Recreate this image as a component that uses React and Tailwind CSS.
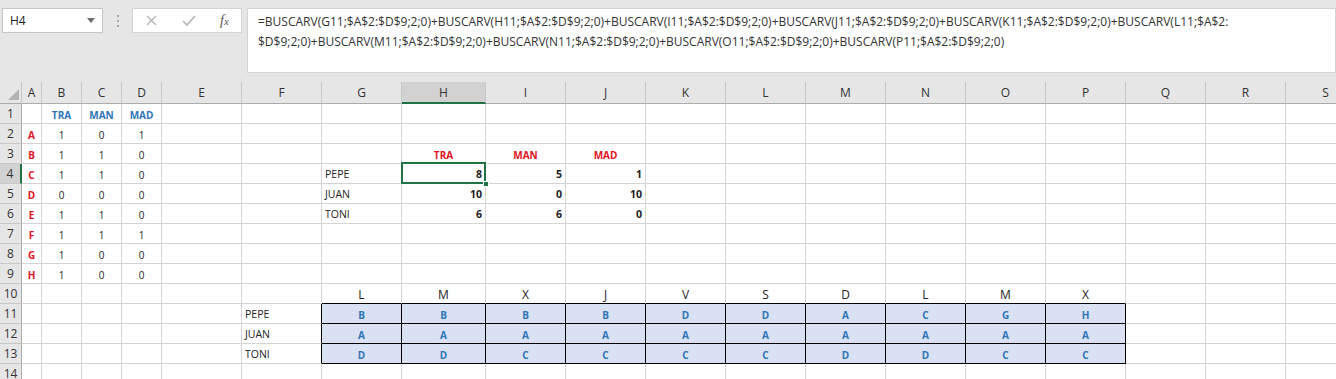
import React from 'react'

const COLS = ['A', 'B', 'C', 'D', 'E', 'F', 'G', 'H', 'I', 'J', 'K', 'L', 'M', 'N', 'O', 'P', 'Q', 'R', 'S']
const ROWS = [1, 2, 3, 4, 5, 6, 7, 8, 9, 10, 11, 12, 13, 14]

const GRID =
  'grid grid-cols-[22px_20px_40px_40px_40px_80px_80px_80px_84px_80px_80px_80px_80px_80px_80px_80px_80px_80px_80px_80px]'

// cell content: [text, kind]
const data = {
  B1: ['TRA', 'head'],
  C1: ['MAN', 'head'],
  D1: ['MAD', 'head'],
  H3: ['TRA', 'red'],
  I3: ['MAN', 'red'],
  J3: ['MAD', 'red'],
  G4: ['PEPE', 'name'],
  G5: ['JUAN', 'name'],
  G6: ['TONI', 'name'],
  H4: ['8', 'bold'],
  I4: ['5', 'bold'],
  J4: ['1', 'bold'],
  H5: ['10', 'bold'],
  I5: ['0', 'bold'],
  J5: ['10', 'bold'],
  H6: ['6', 'bold'],
  I6: ['6', 'bold'],
  J6: ['0', 'bold'],
  F11: ['PEPE', 'name'],
  F12: ['JUAN', 'name'],
  F13: ['TONI', 'name'],
}

const lookup = [
  ['A', 1, 0, 1],
  ['B', 1, 1, 0],
  ['C', 1, 1, 0],
  ['D', 0, 0, 0],
  ['E', 1, 1, 0],
  ['F', 1, 1, 1],
  ['G', 1, 0, 0],
  ['H', 1, 0, 0],
]
lookup.forEach((row, i) => {
  const r = i + 2
  data['A' + r] = [row[0], 'red']
  data['B' + r] = [String(row[1]), 'num']
  data['C' + r] = [String(row[2]), 'num']
  data['D' + r] = [String(row[3]), 'num']
})

const days = ['L', 'M', 'X', 'J', 'V', 'S', 'D', 'L', 'M', 'X']
const plan = [
  ['B', 'B', 'B', 'B', 'D', 'D', 'A', 'C', 'G', 'H'],
  ['A', 'A', 'A', 'A', 'A', 'A', 'A', 'A', 'A', 'A'],
  ['D', 'D', 'C', 'C', 'C', 'C', 'D', 'D', 'C', 'C'],
]
const tblCols = ['G', 'H', 'I', 'J', 'K', 'L', 'M', 'N', 'O', 'P']
tblCols.forEach((c, i) => {
  data[c + '10'] = [days[i], 'day']
  plan.forEach((row, j) => {
    data[c + (11 + j)] = [row[i], 'tbl']
  })
})

const kinds = {
  head: 'justify-center font-bold text-[#2e75b6] text-[10px]',
  red: 'justify-center font-bold text-[#e0141e] text-[10px]',
  num: 'justify-center text-[#222] text-[10px]',
  name: 'justify-start pl-[3px] text-[#222] text-[10.5px]',
  bold: 'justify-end pr-[3px] font-bold text-[#222] text-[10.5px]',
  day: 'justify-center text-[#222] text-[12px]',
  tbl: 'justify-center font-bold text-[#2e75b6] text-[10px] bg-[#d9e1f2]',
}

function Cell({ col, row }) {
  const key = col + row
  const entry = data[key]
  const inTable = tblCols.includes(col) && row >= 11 && row <= 13
  const aboveTable = tblCols.includes(col) && row === 10
  const leftOfTable = col === 'F' && row >= 11 && row <= 13

  let border = 'border-r border-b border-r-[#d4d4d4] border-b-[#d4d4d4]'
  if (inTable) border = 'border-r border-b border-r-black border-b-black'
  else if (aboveTable) border = 'border-r border-b border-r-[#d4d4d4] border-b-black'
  else if (leftOfTable) border = 'border-r border-b border-r-black border-b-[#d4d4d4]'

  const kind = entry ? kinds[entry[1]] : ''
  const active = key === 'H4'

  return (
    <div className={`relative flex h-[20px] items-center pt-[2px] leading-none ${active ? 'z-10' : ''} ${border} ${kind}`}>
      {entry ? entry[0] : null}
      {active && (
        <>
          <div className="pointer-events-none absolute -left-[1px] -top-[2px] -right-[1px] -bottom-[1px] border-2 border-[#217346]" />
          <div className="absolute -right-[4px] -bottom-[4px] h-[6px] w-[6px] border border-white bg-[#217346]" />
        </>
      )}
    </div>
  )
}

function FormulaBar() {
  return (
    <div className="flex h-[82px] items-start bg-[#e6e6e6] pt-[8px]">
      <div className="ml-[2px] flex h-[25px] w-[101px] items-center justify-between border border-[#c6c6c6] bg-white pl-[7px] pr-[7px] text-[12px] text-[#222]">
        <span>H4</span>
        <svg width="8" height="5" viewBox="0 0 8 5">
          <path d="M0 0h8L4 5z" fill="#6b6b6b" />
        </svg>
      </div>
      <div className="ml-[13px] mt-[7px] flex w-[3px] flex-col items-center gap-[3px]">
        <span className="h-[2px] w-[2px] bg-[#a6a6a6]" />
        <span className="h-[2px] w-[2px] bg-[#a6a6a6]" />
        <span className="h-[2px] w-[2px] bg-[#a6a6a6]" />
      </div>
      <div className="ml-[13px] flex h-[25px] w-[110px] items-center border border-[#d4d4d4] bg-white">
        <svg className="ml-[13px]" width="11" height="11" viewBox="0 0 11 11">
          <path d="M1 1l9 9M10 1l-9 9" stroke="#b3b3b3" strokeWidth="1.4" />
        </svg>
        <svg className="ml-[25px]" width="14" height="11" viewBox="0 0 14 11">
          <path d="M1 6l4 4 8-9" stroke="#b3b3b3" strokeWidth="1.6" fill="none" />
        </svg>
        <span className="ml-[24px] font-['Liberation_Serif',serif] text-[14px] italic text-[#555]">
          f<span className="text-[11px]">x</span>
        </span>
      </div>
      <div className="ml-[5px] h-[65px] flex-1 border border-[#d4d4d4] bg-white pl-[10px] pt-[3px] text-[12px] leading-[20px] text-[#333]">
        <div className="whitespace-nowrap">
          =BUSCARV(G11;$A$2:$D$9;2;0)+BUSCARV(H11;$A$2:$D$9;2;0)+BUSCARV(I11;$A$2:$D$9;2;0)+BUSCARV(J11;$A$2:$D$9;2;0)+BUSCARV(K11;$A$2:$D$9;2;0)+BUSCARV(L11;$A$2:
        </div>
        <div className="whitespace-nowrap">
          $D$9;2;0)+BUSCARV(M11;$A$2:$D$9;2;0)+BUSCARV(N11;$A$2:$D$9;2;0)+BUSCARV(O11;$A$2:$D$9;2;0)+BUSCARV(P11;$A$2:$D$9;2;0)
        </div>
      </div>
    </div>
  )
}

export default function App() {
  return (
    <div className="h-[379px] w-[1336px] overflow-hidden bg-white font-['Open_Sans',sans-serif]">
      <FormulaBar />
      <div className={`${GRID} w-[1366px]`}>
        <div className="relative h-[22px] border-r border-b border-r-[#c8c8c8] border-b-[#ababab] bg-[#e6e6e6]">
          <svg className="absolute right-[2px] bottom-[3px]" width="11" height="11" viewBox="0 0 11 11">
            <path d="M11 0v11H0z" fill="#b4b4b4" />
          </svg>
        </div>
        {COLS.map((c) => (
          <div
            key={c}
            className={
              c === 'H'
                ? 'flex h-[22px] items-center justify-center border-r border-b-2 border-r-[#c8c8c8] border-b-[#217346] bg-[#d2d2d2] pt-[1px] text-[12px] text-[#333]'
                : 'flex h-[22px] items-center justify-center border-r border-b border-r-[#c8c8c8] border-b-[#ababab] bg-[#e6e6e6] pt-[1px] text-[12px] text-[#333]'
            }
          >
            {c}
          </div>
        ))}
        {ROWS.map((r) => (
          <React.Fragment key={r}>
            <div
              className={
                r === 4
                  ? 'flex h-[20px] items-center justify-center border-r-2 border-b border-r-[#217346] border-b-[#c8c8c8] bg-[#d2d2d2] text-[12px] text-[#333]'
                  : 'flex h-[20px] items-center justify-center border-r border-b border-r-[#ababab] border-b-[#c8c8c8] bg-[#e6e6e6] text-[12px] text-[#333]'
              }
            >
              {r}
            </div>
            {COLS.map((c) => (
              <Cell key={c} col={c} row={r} />
            ))}
          </React.Fragment>
        ))}
      </div>
    </div>
  )
}
